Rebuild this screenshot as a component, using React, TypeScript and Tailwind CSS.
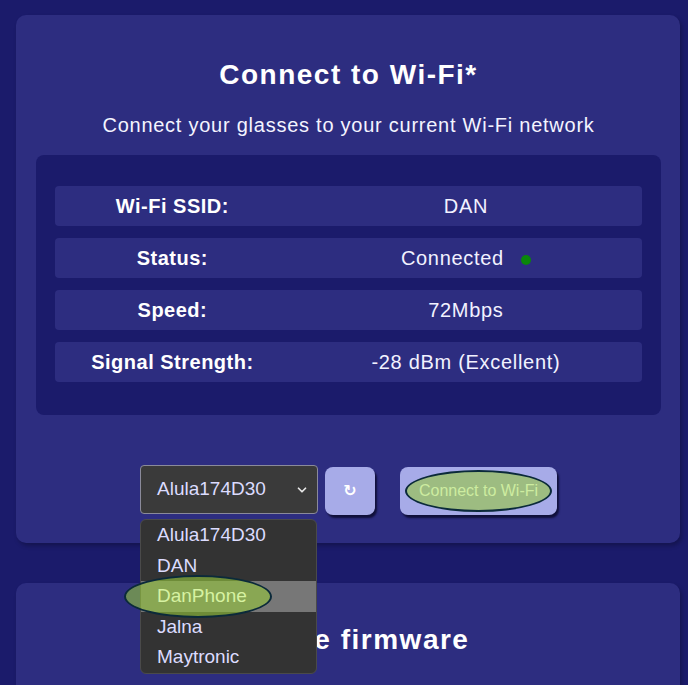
import { ChevronDown } from 'lucide-react';

const rows = [
  { label: 'Wi-Fi SSID:', value: 'DAN' },
  { label: 'Status:', value: 'Connected', dot: true },
  { label: 'Speed:', value: '72Mbps' },
  { label: 'Signal Strength:', value: '-28 dBm (Excellent)' },
];

const networks = ['Alula174D30', 'DAN', 'DanPhone', 'Jalna', 'Maytronic'];

function InfoRow({ label, value, dot }: { label: string; value: string; dot?: boolean }) {
  return (
    <div className="grid h-[40px] grid-cols-[2fr_3fr] items-center rounded-[4px] bg-[#2d2d80]">
      <div className="text-center text-[20px] font-bold tracking-[0.5px] text-white">{label}</div>
      <div className="flex items-center justify-center text-[20px] tracking-[0.7px] text-[#f2f2ff]">
        <span>{value}</span>
        {dot && <span className="ml-[17px] mt-[3px] h-[10px] w-[10px] rounded-full bg-[#0a870a]" />}
      </div>
    </div>
  );
}

function NetworkPicker() {
  return (
    <div className="relative">
      <div className="flex h-[49px] w-[178px] items-center justify-between rounded-[4px] border border-[#8a8a9a] bg-[#3a3a3a] pl-[16px] pr-[8px] text-[19px] text-[#dcdcff]">
        <span>Alula174D30</span>
        <ChevronDown size={14} strokeWidth={3} className="text-[#e6e6e6]" />
      </div>
      <div className="absolute left-0 top-[54px] z-10 w-[177px] rounded-[6px] border border-[#4a4a4a] bg-[#333333]">
        {networks.map((n) => (
          <div
            key={n}
            className={
              'relative flex h-[30.5px] items-center pl-[16px] text-[19px] ' +
              (n === 'DanPhone' ? 'bg-[#777777] text-[#d6f2a2]' : 'text-[#dcdcff]')
            }
          >
            {n === 'DanPhone' && (
              <span className="absolute left-[-17px] top-[-6px] h-[43px] w-[148px] rounded-[50%] border-2 border-[#0b2a3a] bg-[rgba(150,200,60,0.6)]" />
            )}
            <span className="relative">{n}</span>
          </div>
        ))}
      </div>
    </div>
  );
}

export default function App() {
  return (
    <div
      className="h-[685px] overflow-hidden bg-[#1b1b6b] pl-[16px] pr-[8px] pt-[15px]"
      style={{ fontFamily: '"Liberation Sans", Arial, sans-serif' }}
    >
      <div className="rounded-[10px] bg-[#2d2d80] pl-[20px] pr-[19px] pt-[44px] pb-[28px] shadow-[2px_3px_4px_rgba(0,0,0,0.25)]">
        <h2 className="text-center text-[28px] font-bold leading-[32px] tracking-[1.5px] text-white">
          Connect to Wi-Fi*
        </h2>
        <p className="mt-[23px] text-center text-[20px] leading-[23px] tracking-[0.75px] text-[#f4f4ff]">
          Connect your glasses to your current Wi-Fi network
        </p>
        <div className="mt-[18px] flex flex-col gap-[12px] rounded-[8px] bg-[#1b1b6b] px-[19px] pt-[31px] pb-[33px]">
          {rows.map((r) => (
            <InfoRow key={r.label} {...r} />
          ))}
        </div>
        <div className="mt-[50px] flex items-start justify-center">
          <NetworkPicker />
          <button className="ml-[7px] mt-[2px] flex h-[48px] w-[50px] items-center justify-center rounded-[8px] bg-[#a7abe8] text-[16px] font-bold text-white shadow-[2px_3px_2px_#10103a]">
            <span style={{ fontFamily: '"DejaVu Sans", sans-serif' }}>↻</span>
          </button>
          <button className="ml-[25px] mt-[2px] flex h-[48px] w-[157px] items-center justify-center rounded-[8px] bg-[#a7abe8] shadow-[2px_3px_2px_#10103a]">
            <span className="flex h-[42px] w-[147px] items-center justify-center rounded-[50%] border-2 border-[#0b2a3a] bg-[rgba(150,200,60,0.6)] text-[16px] text-[#cdeca0]">
              Connect to Wi-Fi
            </span>
          </button>
        </div>
      </div>
      <div className="mt-[40px] h-[200px] rounded-[10px] bg-[#2d2d80] pl-[20px] pr-[19px] pt-[41px] shadow-[2px_3px_4px_rgba(0,0,0,0.25)]">
        <h2 className="text-center text-[28px] font-bold leading-[32px] tracking-[1.5px] text-white">
          Update firmware
        </h2>
      </div>
    </div>
  );
}
